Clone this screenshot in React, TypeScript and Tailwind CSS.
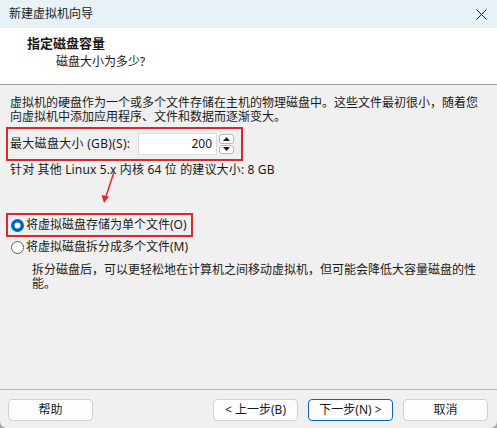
import React from "react";

function Radio({ checked }: { checked: boolean }) {
  return (
    <svg width="13" height="13" viewBox="0 0 13 13" className="shrink-0">
      {checked ? (
        <>
          <circle cx="6.5" cy="6.5" r="6.5" fill="#0067c0" />
          <circle cx="6.5" cy="6.5" r="3" fill="#ffffff" />
        </>
      ) : (
        <circle cx="6.5" cy="6.5" r="6" fill="#ffffff" stroke="#5c5c5c" strokeWidth="1" />
      )}
    </svg>
  );
}

function Btn({ label, primary }: { label: string; primary?: boolean }) {
  return (
    <div
      className={
        primary
          ? "w-[85px] h-[22px] flex items-center justify-center rounded-[4px] border border-[#0067c0] bg-[#fdfdfd] text-[12px] text-[#1a1a1a]"
          : "w-[85px] h-[22px] flex items-center justify-center rounded-[4px] border border-[#d0d0d0] bg-[#fdfdfd] text-[12px] text-[#1a1a1a]"
      }
    >
      {label}
    </div>
  );
}

export default function App() {
  return (
    <div className="w-[497px] h-[428px] bg-[#a8a8a8] font-['Noto_Sans','Noto_Sans_CJK_SC',sans-serif] text-[12px] text-[#1a1a1a]">
      <div className="w-[497px] h-[428px] flex flex-col bg-[#f0f0f0] rounded-b-[7px] overflow-hidden">
        {/* Title bar */}
        <div className="h-[28px] shrink-0 bg-[#e6f2f6] flex items-center justify-between pl-[9px] pr-[10px]">
          <span className="text-[12px] leading-[14px] text-[#1a1a1a]">新建虚拟机向导</span>
          <svg width="11" height="11" viewBox="0 0 11 11">
            <path d="M0.5 0.5 L10.5 10.5 M10.5 0.5 L0.5 10.5" stroke="#1a1a1a" strokeWidth="1" />
          </svg>
        </div>
        {/* Header */}
        <div className="h-[57px] shrink-0 bg-white border-b border-[#a0a0a0] flex flex-col pl-[27px] pt-[7px]">
          <div className="text-[13px] leading-[16px] font-bold">指定磁盘容量</div>
          <div className="pl-[29px] mt-[3px] text-[12px] leading-[16px]">磁盘大小为多少?</div>
        </div>
        {/* Body */}
        <div className="relative flex-1 flex flex-col px-[6px] pt-[11px]">
          <div className="pl-[4px] leading-[14px]">
            <div>虚拟机的硬盘作为一个或多个文件存储在主机的物理磁盘中。这些文件最初很小，随着您</div>
            <div>向虚拟机中添加应用程序、文件和数据而逐渐变大。</div>
          </div>
          <div className="mt-[3px] w-[237px] h-[34px] border-2 border-[#e0262d] flex items-center pl-[2px]">
            <div className="w-[128px] leading-[14px] tracking-[0.3px]">最大磁盘大小 (GB)(S):</div>
            <div className="w-[79px] h-[22px] bg-white border border-[#dcdcdc] flex items-center justify-end pr-[4px]">
              200
            </div>
            <div className="ml-[2px] w-[15px] h-[20px] flex flex-col gap-[1px]">
              <div className="flex-1 bg-white border border-[#b8b8b8] rounded-[3px] flex items-center justify-center">
                <svg width="7" height="4" viewBox="0 0 7 4">
                  <path d="M3.5 0 L7 4 L0 4 Z" fill="#1a1a1a" />
                </svg>
              </div>
              <div className="flex-1 bg-white border border-[#b8b8b8] rounded-[3px] flex items-center justify-center">
                <svg width="7" height="4" viewBox="0 0 7 4">
                  <path d="M0 0 L7 0 L3.5 4 Z" fill="#1a1a1a" />
                </svg>
              </div>
            </div>
          </div>
          <div className="mt-[2px] pl-[4px] leading-[14px] tracking-[0.15px]">针对 其他 Linux 5.x 内核 64 位 的建议大小: 8 GB</div>

          <div className="mt-[36px] w-[187px] h-[24px] border-2 border-[#e0262d] flex items-center pl-[3px] gap-[2px]">
            <Radio checked />
            <span className="leading-[14px]">将虚拟磁盘存储为单个文件(O)</span>
          </div>
          <div className="h-[20px] flex items-center pl-[5px] gap-[2px]">
            <Radio checked={false} />
            <span className="leading-[14px]">将虚拟磁盘拆分成多个文件(M)</span>
          </div>
          <div className="mt-[6px] pl-[26px] leading-[14px]">
            <div>拆分磁盘后，可以更轻松地在计算机之间移动虚拟机，但可能会降低大容量磁盘的性</div>
            <div>能。</div>
          </div>

          <svg
            className="absolute left-[96px] top-[85px]"
            width="24"
            height="36"
            viewBox="0 0 24 36"
          >
            <path d="M18 2 L9.5 28" stroke="#e0262d" strokeWidth="1.5" fill="none" />
            <path d="M5.5 25 L8 33 L13 26.5 Z" fill="#e0262d" />
          </svg>
        </div>
        {/* Footer */}
        <div className="h-[39px] shrink-0 border-t border-[#b4b4b4] flex items-start pt-[9px] pl-[8px] pr-[9px]">
          <Btn label="帮助" />
          <div className="flex-1" />
          <div className="flex gap-[10px]">
            <Btn label="< 上一步(B)" />
            <Btn label="下一步(N) >" primary />
            <Btn label="取消" />
          </div>
        </div>
      </div>
    </div>
  );
}
